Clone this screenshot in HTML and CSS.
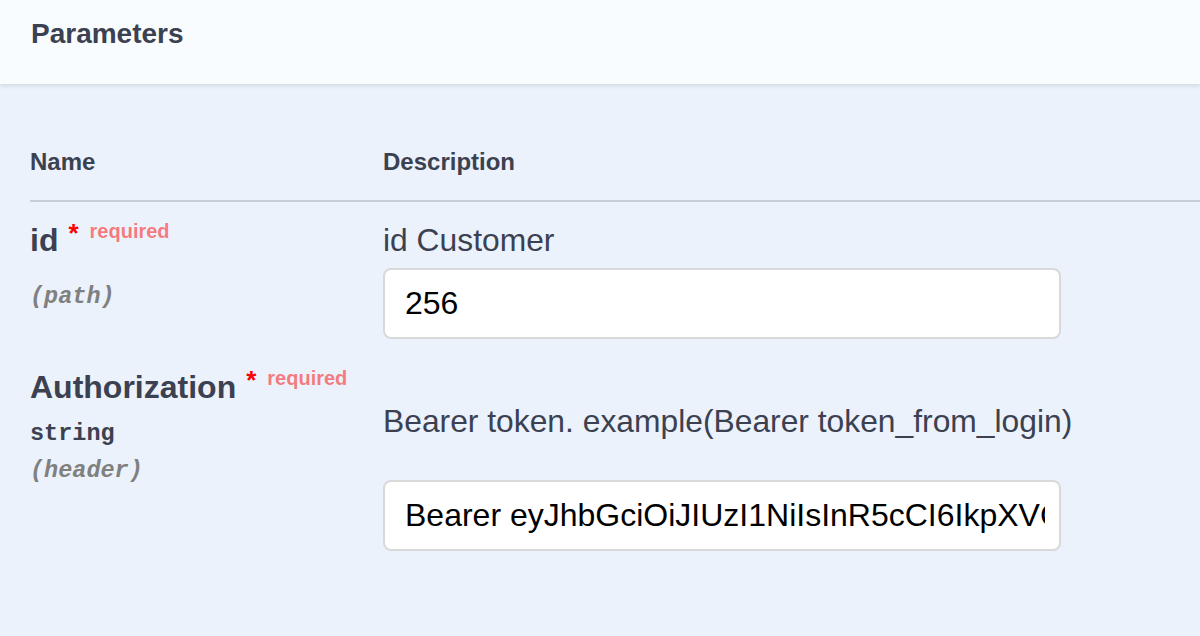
FILE: index.html
```html
<!DOCTYPE html>
<html>
<head>
<meta charset="utf-8">
<link rel="stylesheet" href="styles.css">
</head>
<body>
<div class="section-header"><h4 class="title">Parameters</h4></div>
<div class="params">
  <div class="thead">
    <div class="col-name">Name</div>
    <div class="col-desc">Description</div>
  </div>
  <div class="row row-id">
    <div class="col-name">
      <div class="pname">id<span class="star">*</span><span class="req">required</span></div>
      <div class="pin">(path)</div>
    </div>
    <div class="col-desc">
      <p class="md">id Customer</p>
      <input class="field" type="text" value="256">
    </div>
  </div>
  <div class="row row-auth">
    <div class="col-name">
      <div class="pname">Authorization<span class="star">*</span><span class="req">required</span></div>
      <div class="ptype">string</div>
      <div class="pin">(header)</div>
    </div>
    <div class="col-desc">
      <p class="md md-auth">Bearer token. example(Bearer token_from_login)</p>
      <input class="field field-auth" type="text" value="Bearer eyJhbGciOiJIUzI1NiIsInR5cCI6IkpXVCJ9.eyJzdWIiOiIxMjM0NTY3ODkwIiwibmFtZSI6IkpvaG4gRG9lIn0">
    </div>
  </div>
</div>
</body>
</html>
```
FILE: styles.css
```css
html, body {
  margin: 0;
  padding: 0;
}
body {
  background: #ebf2fb;
  font-family: "Liberation Sans", Arial, sans-serif;
  color: #3b4151;
  width: 1200px;
  height: 636px;
  overflow: hidden;
}
.section-header {
  height: 84px;
  background: #f8fcfe;
  box-shadow: 0 2px 4px rgba(0, 0, 0, 0.1);
  display: flex;
  align-items: center;
  padding-left: 31px;
  position: relative;
}
.title {
  margin: 0;
  font-size: 28px;
  font-weight: 700;
  color: #3b4151;
  transform: translateY(-8px);
}
.params {
  padding-left: 30px;
}
.thead {
  display: flex;
  align-items: flex-end;
  height: 100px;
  padding-bottom: 24px;
  box-sizing: border-box;
  border-bottom: 2px solid #c8ced8;
  margin-top: 18px;
  font-size: 24px;
  font-weight: 700;
}
.col-name {
  width: 353px;
  flex: none;
}
.col-desc {
  flex: 1;
}
.row {
  display: flex;
}
.pname {
  font-size: 32px;
  font-weight: 700;
  line-height: 40px;
  white-space: nowrap;
}
.star {
  color: #ff0000;
  font-size: 26px;
  padding-left: 10px;
  position: relative;
  top: -9px;
}
.req {
  color: rgba(255, 0, 0, 0.5);
  font-size: 20px;
  position: relative;
  top: -13px;
  padding-left: 11px;
}
.pin {
  font-family: "Liberation Mono", "Courier New", monospace;
  font-size: 23.5px;
  font-style: italic;
  font-weight: 700;
  color: #808080;
  line-height: 30px;
}
.ptype {
  font-family: "Liberation Mono", "Courier New", monospace;
  font-size: 23.5px;
  font-weight: 700;
  color: #3b4151;
  line-height: 30px;
  margin-top: 8px;
  margin-bottom: 7px;
}
.row-id {
  padding-top: 18px;
}
.row-id .pin {
  margin-top: 18px;
}
.row-auth {
  padding-top: 28px;
}
.md {
  margin: 0;
  font-size: 31.8px;
  line-height: 36px;
}
.row-id .md {
  margin-top: 2px;
}
.md-auth {
  margin-top: 36px;
}
.field {
  display: block;
  box-sizing: border-box;
  width: 678px;
  height: 71px;
  margin-top: 10px;
  padding: 0 14px 0 20px;
  border: 2px solid #d9d9d9;
  border-radius: 8px;
  background: #ffffff;
  font-family: "Liberation Sans", Arial, sans-serif;
  font-size: 32px;
  color: #000000;
  outline: none;
}
.field-auth {
  margin-top: 41px;
}
```
